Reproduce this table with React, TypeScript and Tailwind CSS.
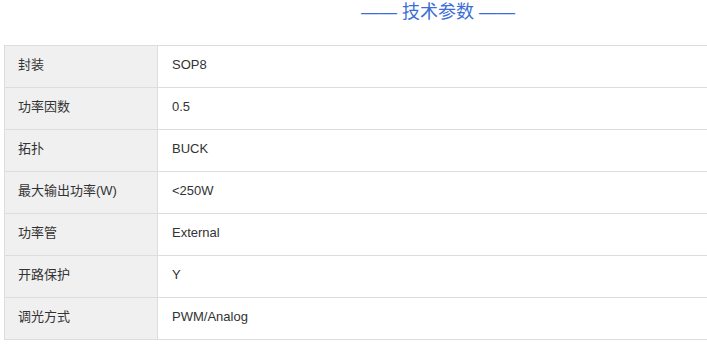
const ROWS = [
  ["封装", "SOP8"],
  ["功率因数", "0.5"],
  ["拓扑", "BUCK"],
  ["最大输出功率(W)", "<250W"],
  ["功率管", "External"],
  ["开路保护", "Y"],
  ["调光方式", "PWM/Analog"],
];

export default function App() {
  return (
    <div
      className="w-[707px] h-[346px] overflow-hidden bg-white"
      style={{ fontFamily: '"Liberation Sans", "Noto Sans CJK SC", sans-serif' }}
    >
      <div className="h-[45px] pl-[361px] text-[18px] leading-[24px] text-[#3a6ed6] whitespace-nowrap">
        —— 技术参数 ——
      </div>
      <table className="ml-[4px] w-[720px] border-collapse text-[13px] text-[#333]">
        <tbody>
          {ROWS.map(([k, v]) => (
            <tr key={k} className="h-[42px]">
              <td className="w-[153px] border border-[#dddddd] bg-[#f0f0f0] pl-[13px] pb-[3px]">{k}</td>
              <td className="border border-[#dddddd] pl-[14px] pb-[3px]">{v}</td>
            </tr>
          ))}
        </tbody>
      </table>
    </div>
  );
}
